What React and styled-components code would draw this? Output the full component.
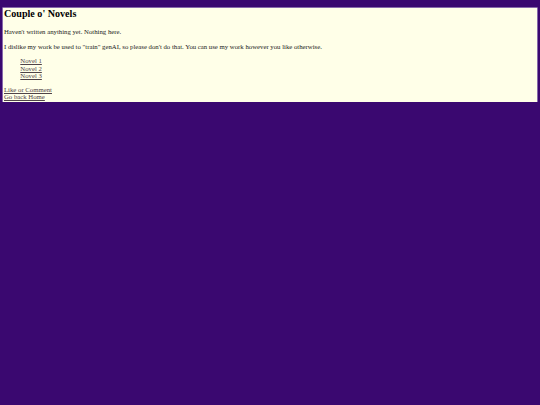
import React from "react";
import styled, { createGlobalStyle } from "styled-components";

const Global = createGlobalStyle`
  html, body {
    margin: 0;
    padding: 0;
    background: #3a0870;
  }
  body {
    padding: 8px 3.4px 0;
    font-family: "Liberation Serif", "Times New Roman", serif;
    font-size: 6.75px;
    line-height: 7.7px;
    color: #1a1a1a;
  }
`;

const Panel = styled.main`
  background: #ffffe8;
  box-shadow: 0 0 0 0.6px #b9a9d2;
  padding: 0.2px 0 1.4px 0.6px;
`;

const Title = styled.h2`
  margin: 0 0 8.4px;
  font-size: 10.1px;
  line-height: 11.6px;
  font-weight: bold;
  color: #000;
`;

const Para = styled.p`
  margin: 6.75px 0;
`;

const NovelList = styled.ul`
  list-style: none;
  margin: 6.75px 0 6.2px;
  padding-left: 16.3px;
`;

const Item = styled.li`
  line-height: 7.5px;
`;

const Link = styled.a`
  color: #4f4348;
  text-decoration: underline;
  text-decoration-thickness: 0.5px;
  text-underline-offset: 0.8px;
`;

const FooterLinks = styled.nav`
  display: flex;
  flex-direction: column;
  align-items: flex-start;
  line-height: 7.6px;
`;

export default function App() {
  return (
    <>
      <Global />
      <Panel>
        <Title>Couple o' Novels</Title>
        <Para>Haven't written anything yet. Nothing here.</Para>
        <Para>
          I dislike my work be used to "train" genAI, so please don't do that. You can use my
          work however you like otherwise.
        </Para>
        <NovelList>
          <Item><Link href="#">Novel 1</Link></Item>
          <Item><Link href="#">Novel 2</Link></Item>
          <Item><Link href="#">Novel 3</Link></Item>
        </NovelList>
        <FooterLinks>
          <Link href="#">Like or Comment</Link>
          <Link href="#">Go back Home</Link>
        </FooterLinks>
      </Panel>
    </>
  );
}
